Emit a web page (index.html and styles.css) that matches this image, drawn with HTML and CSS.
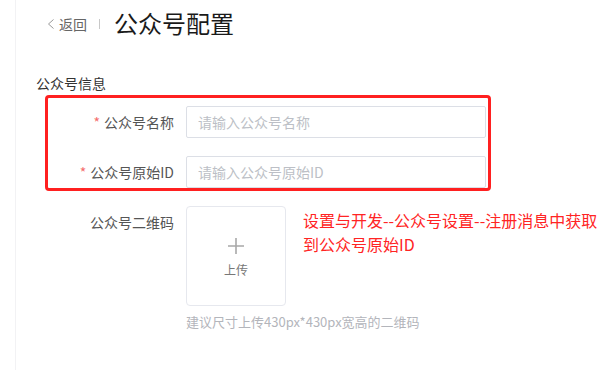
FILE: index.html
```html
<!DOCTYPE html>
<html lang="zh-CN">
<head>
<meta charset="utf-8">
<title>公众号配置</title>
<link rel="stylesheet" href="styles.css">
</head>
<body>
<div class="page">
  <header class="head">
    <a class="back" href="#">
      <svg class="chev" width="8" height="10" viewBox="0 0 8 10"><path d="M6.5 0.5 L1.5 5 L6.5 9.5" fill="none" stroke="#999" stroke-width="1"/></svg>
      <span>返回</span>
    </a>
    <span class="sep"></span>
    <h1 class="title">公众号配置</h1>
  </header>

  <h2 class="section">公众号信息</h2>

  <div class="form">
    <div class="row">
      <label class="label"><span class="star">*</span>公众号名称</label>
      <input class="input" type="text" placeholder="请输入公众号名称">
    </div>
    <div class="row">
      <label class="label"><span class="star">*</span>公众号原始ID</label>
      <input class="input" type="text" placeholder="请输入公众号原始ID">
    </div>
    <div class="row">
      <label class="label">公众号二维码</label>
      <div class="field">
        <div class="upline">
          <div class="upload">
            <svg class="plus" width="16" height="16" viewBox="0 0 16 16"><path d="M8 0 V16 M0 8 H16" stroke="#a8a8a8" stroke-width="1.6"/></svg>
            <span class="uptext">上传</span>
          </div>
          <p class="note">设置与开发--公众号设置--注册消息中获取到公众号原始ID</p>
        </div>
        <p class="hint">建议尺寸上传430px*430px宽高的二维码</p>
      </div>
    </div>
  </div>

  <div class="annot"></div>
</div>
</body>
</html>
```

FILE: styles.css
```css
* { box-sizing: border-box; }
html, body {
  margin: 0;
  padding: 0;
  background: #fff;
  font-family: "Noto Sans CJK SC", "Noto Sans", sans-serif;
}
.page {
  position: relative;
  margin-left: 15px;
  border-left: 1px solid #f2f2f4;
  height: 370px;
}
.head {
  display: flex;
  align-items: center;
  height: 48px;
  padding-left: 31px;
}
.back {
  display: flex;
  align-items: center;
  gap: 4px;
  color: #666;
  font-size: 14px;
  text-decoration: none;
  line-height: 20px;
}
.chev { display: block; }
.sep {
  width: 1px;
  height: 10px;
  background: #c8c8c8;
  margin: 0 14px 0 12px;
}
.title {
  margin: 0;
  font-size: 24px;
  font-weight: 400;
  color: #1a1a1a;
  line-height: 32px;
  position: relative;
  top: -1px;
}
.section {
  margin: 25px 0 0 20px;
  font-size: 14px;
  font-weight: 400;
  color: #333;
  line-height: 20px;
}
.form {
  margin-top: 13px;
  display: flex;
  flex-direction: column;
  gap: 18px;
}
.row {
  display: flex;
  align-items: flex-start;
}
.label {
  width: 158px;
  margin-right: 12px;
  text-align: right;
  font-size: 14px;
  line-height: 32px;
  color: #555;
}
.star {
  color: #f56c6c;
  margin-right: 4px;
}
.input {
  width: 300px;
  height: 32px;
  border: 1px solid #dcdfe6;
  border-radius: 2px;
  padding: 0 11px;
  font-family: inherit;
  font-size: 14px;
  color: #333;
  outline: none;
}
.input::placeholder { color: #bcbfc6; }
.field {
  display: flex;
  flex-direction: column;
}
.upline {
  display: flex;
  align-items: flex-start;
}
.upload {
  width: 100px;
  height: 100px;
  border: 1px solid #e6e8ee;
  border-radius: 4px;
  display: flex;
  flex-direction: column;
  align-items: center;
  padding-top: 31px;
}
.plus { display: block; }
.uptext {
  margin-top: 8px;
  font-size: 12px;
  line-height: 16px;
  color: #777;
}
.note {
  margin: 2px 0 0 17px;
  width: 300px;
  font-size: 16px;
  line-height: 24px;
  color: #ff2424;
}
.hint {
  margin: 6px 0 0;
  font-size: 13px;
  line-height: 20px;
  color: #b3b5bb;
}
.annot {
  position: absolute;
  left: 29px;
  top: 95px;
  width: 446px;
  height: 96px;
  border: 3px solid #ff2020;
  border-radius: 4px;
  pointer-events: none;
}
```
